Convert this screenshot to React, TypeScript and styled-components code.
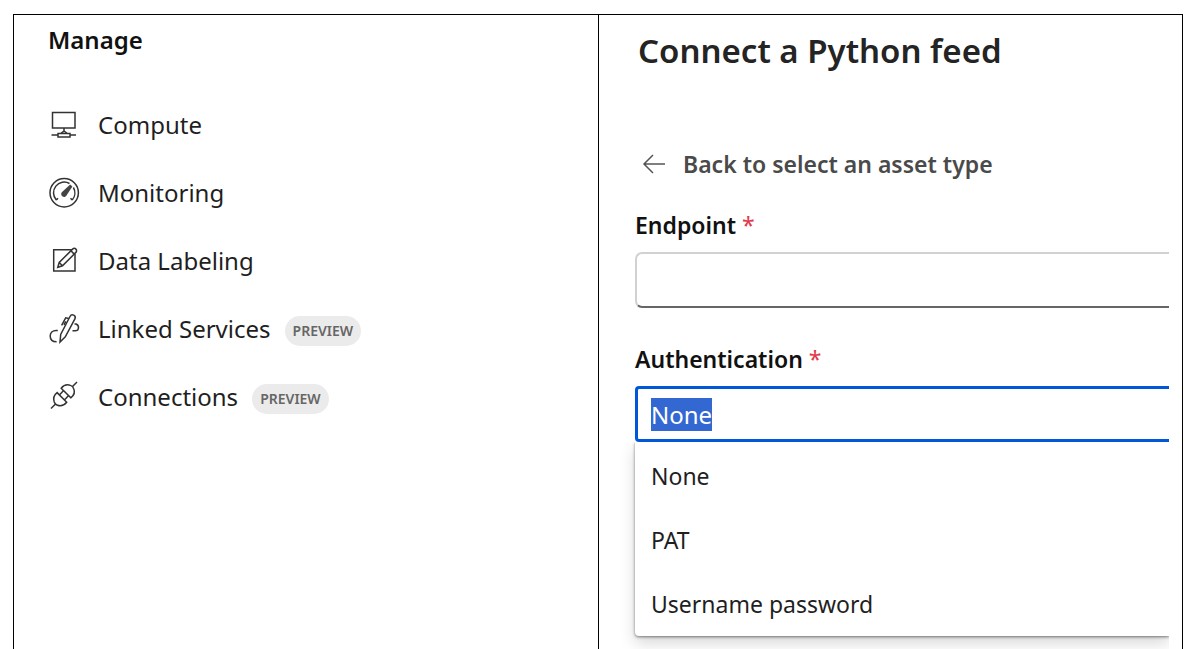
import React, { useEffect, useRef } from "react";
import styled, { createGlobalStyle } from "styled-components";

const GlobalStyle = createGlobalStyle`
  *, *::before, *::after { box-sizing: border-box; }
  body {
    margin: 0;
    background: #fff;
    color: #1f1f1f;
    font-family: "Noto Sans", "Open Sans", sans-serif;
    font-size: 24px;
    line-height: 34px;
  }
`;

const Page = styled.div`
  display: flex;
  min-height: 100vh;
  padding: 14px 17px 0 13px;
`;

const Frame = styled.div`
  flex: 1;
  display: grid;
  grid-template-columns: 1fr 1fr;
  border: 1px solid #000;
  border-bottom: 0;
`;

const Sidebar = styled.nav`
  padding: 8px 34px;
`;

const SidebarTitle = styled.h2`
  margin: 0 0 51px;
  color: #111;
  font-size: 24px;
  line-height: 34px;
  font-weight: 600;
`;

const NavList = styled.ul`
  display: grid;
  gap: 34px;
  margin: 0;
  padding: 0;
  list-style: none;
`;

const NavLink = styled.a`
  display: flex;
  align-items: center;
  color: inherit;
  text-decoration: none;
`;

const NavIcon = styled.svg`
  flex: none;
  width: 32px;
  height: 32px;
  margin-right: 18px;
  fill: none;
  stroke: #333;
  stroke-width: 1.5;
`;

const Badge = styled.span`
  margin: 4px 0 0 14px;
  padding: 0 8px;
  border-radius: 15px;
  background: #ebebeb;
  color: #666;
  font-size: 14px;
  line-height: 30px;
  font-weight: 600;
`;

const Panel = styled.main`
  min-width: 0;
  padding-right: 13px;
  border-left: 1px solid #000;
`;

const PanelBody = styled.div`
  height: 100%;
  padding: 14px 0 12px 36px;
  overflow: hidden;
`;

const PanelTitle = styled.h1`
  margin: 0 0 74px;
  padding-left: 3px;
  color: #242424;
  font-size: 33px;
  line-height: 44px;
  font-weight: 600;
`;

const BackButton = styled.button`
  display: flex;
  align-items: center;
  gap: 18px;
  margin: 0 0 27px;
  padding: 0 0 0 6px;
  border: 0;
  background: none;
  color: #4a4a4a;
  font: inherit;
  font-size: 23px;
  font-weight: 600;
  cursor: pointer;
`;

const BackIcon = styled.svg`
  width: 24px;
  height: 24px;
  fill: none;
  stroke: #555;
  stroke-width: 1.5;
`;

const Field = styled.div`
  margin-bottom: 34px;
`;

const Label = styled.label`
  display: block;
  margin-bottom: 10px;
  color: #111;
  font-size: 23px;
  font-weight: 600;
`;

const Required = styled.span`
  margin-left: 6px;
  color: #e3384a;
  font-weight: 400;
`;

const TextInput = styled.input`
  display: block;
  width: 100%;
  height: 56px;
  padding: 0 16px;
  border: 1px solid #d1d1d1;
  border-width: 2px 0 2px 2px;
  border-bottom-color: #666;
  border-radius: 7px 0 0 7px;
  outline: 0;
  background: #fff;
  color: inherit;
  font: inherit;
`;

const Combo = styled.div`
  position: relative;
`;

const ComboInput = styled(TextInput)`
  padding-left: 13px;
  border: 3px solid #0058d8;
  border-right: 0;
  border-radius: 4px 0 0 4px;
  caret-color: transparent;

  &::selection {
    background: #3367d1;
    color: #fff;
  }
`;

const Menu = styled.ul`
  position: absolute;
  top: 100%;
  left: 0;
  right: 0;
  margin: 0;
  padding: 2px 0 0;
  border-radius: 0 0 0 4px;
  background: #fff;
  box-shadow: 0 1px 3px rgba(0, 0, 0, 0.5), 0 7px 16px rgba(0, 0, 0, 0.16);
  clip-path: inset(0 0 -40px -40px);
  font-size: 23px;
  list-style: none;
`;

const Option = styled.li`
  padding: 15px 16px;
  cursor: pointer;
`;

const ComputeIcon = () => (
  <NavIcon viewBox="0 0 32 32" aria-hidden="true">
    <path d="M4.5 3.5H27V19H4.5ZM16 19V22L12.5 24.5M16 22L19.5 24.5M3.5 26H10M22 26H28M10 24.5H22V28H10Z" />
  </NavIcon>
);

const MonitoringIcon = () => (
  <NavIcon viewBox="0 0 32 32" aria-hidden="true">
    <circle cx="16.2" cy="15.8" r="14.2" />
    <path d="M8.3 23A10.7 10.7 0 0 1 21.5 6.5M25.4 10.5A10.7 10.7 0 0 1 24.2 23M8.3 23L10 21.2M24.2 23L22.5 21.2" />
    <path d="M22.2 7.6L13.8 15.2A2.9 2.9 0 1 0 18.8 18L24.4 9.4Z" fill="#444" stroke="none" />
  </NavIcon>
);

const LabelingIcon = () => (
  <NavIcon viewBox="0 0 32 32" aria-hidden="true">
    <path d="M24 4.8H5.7V26H27V9" />
    <path d="M9.8 22.3L11.2 17.5L24.6 4.1A2.2 2.2 0 0 1 27.9 7.4L14.5 20.8ZM11.2 17.5L14.5 20.8M22.9 5.8L26.2 9.1" fill="#fff" />
  </NavIcon>
);

const LinkedIcon = () => (
  <NavIcon viewBox="0 0 32 32" aria-hidden="true">
    <path d="M9.8 17.5H8.2C4.5 17.5 2.2 20 2.2 23C2.2 26.8 4.8 28.8 8.6 28.8" />
    <path d="M12 29L12.7 21.4L22 3.5C23.6 .3 28.5 2.3 26.9 5.9L17.3 23.8Z" />
    <path d="M20.8 5.5L17.7 4.8L13.6 12.3M17.8 8.3L16 11.8M26.5 11H28C31.7 12.5 31.2 17.8 27.2 17.8H24.5" />
  </NavIcon>
);

const ConnectionsIcon = () => (
  <NavIcon viewBox="0 0 32 32" aria-hidden="true">
    <path d="M29 1L24.5 5.5M3 27.5L7.5 23" />
    <path d="M13.2 7.2L22.8 16.8C26 14.5 27 10.8 25.7 7.8C25.2 6 24.5 5 22.5 4.4C19.3 3.2 15.6 4.2 13.2 7.2Z" />
    <path d="M9.1 11.6L18.7 21.2C16 24.5 12.5 25.2 9.5 24.2C7.6 23.6 6.8 22.5 6.2 20.9C5.2 17.8 6 14 9.1 11.6ZM11.4 13.9L15.6 9.6M16.4 18.9L20.6 14.6" />
  </NavIcon>
);

const navItems = [
  { label: "Compute", Icon: ComputeIcon },
  { label: "Monitoring", Icon: MonitoringIcon },
  { label: "Data Labeling", Icon: LabelingIcon },
  { label: "Linked Services", Icon: LinkedIcon, preview: true },
  { label: "Connections", Icon: ConnectionsIcon, preview: true },
];

const authOptions = ["None", "PAT", "Username password"];

export default function App() {
  const authRef = useRef<HTMLInputElement>(null);

  useEffect(() => {
    authRef.current?.focus();
    authRef.current?.select();
  }, []);

  return (
    <>
      <GlobalStyle />
      <Page>
        <Frame>
          <Sidebar aria-labelledby="manage-title">
            <SidebarTitle id="manage-title">Manage</SidebarTitle>
            <NavList>
              {navItems.map(({ label, Icon, preview }) => (
                <li key={label}>
                  <NavLink href="#">
                    <Icon />
                    {label}
                    {preview && <Badge>PREVIEW</Badge>}
                  </NavLink>
                </li>
              ))}
            </NavList>
          </Sidebar>
          <Panel>
            <PanelBody>
              <PanelTitle>Connect a Python feed</PanelTitle>
              <BackButton type="button">
                <BackIcon viewBox="0 0 24 24" aria-hidden="true">
                  <path d="M24 12H3M12 3L3 12L12 21" />
                </BackIcon>
                Back to select an asset type
              </BackButton>
              <Field>
                <Label htmlFor="endpoint">
                  Endpoint<Required>*</Required>
                </Label>
                <TextInput id="endpoint" type="text" required />
              </Field>
              <Field>
                <Label htmlFor="authentication">
                  Authentication<Required>*</Required>
                </Label>
                <Combo>
                  <ComboInput
                    id="authentication"
                    ref={authRef}
                    type="text"
                    role="combobox"
                    aria-expanded="true"
                    aria-controls="authentication-options"
                    defaultValue="None"
                    required
                  />
                  <Menu id="authentication-options" role="listbox" aria-label="Authentication">
                    {authOptions.map((option) => (
                      <Option key={option} role="option" aria-selected={option === "None"}>
                        {option}
                      </Option>
                    ))}
                  </Menu>
                </Combo>
              </Field>
            </PanelBody>
          </Panel>
        </Frame>
      </Page>
    </>
  );
}
